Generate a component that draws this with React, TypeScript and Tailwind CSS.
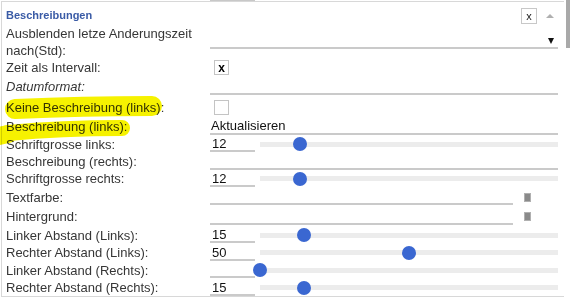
import type { ReactNode } from 'react';

interface RowProps {
  h: string;
  label: ReactNode;
  italic?: boolean;
  children?: ReactNode;
}

function Row({ h, label, italic, children }: RowProps) {
  return (
    <div className={`flex items-center ${h}`}>
      <div className={`w-[208px] shrink-0 pl-[4px] text-[13px] leading-[17px] text-[#363636] ${italic ? 'italic' : ''}`}>
        {label}
      </div>
      <div className="flex flex-1 items-center pr-[6px]">{children}</div>
    </div>
  );
}

function Field({ value, width = 'w-[45px]' }: { value?: string; width?: string }) {
  return (
    <div className={`h-[16px] shrink-0 border-b-2 border-[#cacaca] pl-[2px] pt-[1px] text-[13px] leading-[14px] text-[#111] ${width}`}>
      {value}
    </div>
  );
}

function Slider({ at }: { at: number }) {
  return (
    <div className="relative ml-[5px] h-[5px] flex-1 bg-[#ececec]">
      <div
        className="absolute top-1/2 h-[14px] w-[14px] -translate-y-1/2 rounded-full bg-[#3a67d1]"
        style={{ left: at - 7 }}
      />
    </div>
  );
}

function Check({ on }: { on?: boolean }) {
  return (
    <div className="ml-[4px] flex h-[15px] w-[15px] items-center justify-center border border-[#c4c4c4] text-[12px] font-bold leading-none text-black">
      {on ? 'x' : ''}
    </div>
  );
}

function Swatch() {
  return <div className="ml-[11px] h-[9px] w-[7px] border border-[#b0b0b0] bg-[#8a8a8a]" />;
}

export default function App() {
  return (
    <div className="relative h-[301px] w-[570px] overflow-hidden bg-white font-['Liberation_Sans',Arial,sans-serif]">
      <div className="h-[1px] pl-[210px]">
        <div className="h-full w-[45px] bg-[#c8c8c8]" />
      </div>

      <div className="ml-[1px] w-[563px] border-t border-b border-l border-[#d8d8d8]">
        <div className="flex h-[23px] items-start">
          <div className="pl-[4px] pt-[7px] text-[11px] font-bold leading-[13px] text-[#3a5ba6]">Beschreibungen</div>
          <div className="ml-auto mt-[6px] flex h-[16px] w-[16px] items-center justify-center border border-[#c8c8c8] text-[11px] leading-none text-[#222]">
            x
          </div>
          <div className="ml-[9px] mr-[10px] mt-[12px] h-0 w-0 border-x-[4px] border-b-[4px] border-x-transparent border-b-[#b0b0b0]" />
        </div>

        <Row h="h-[34px]" label={<>Ausblenden letze Anderungszeit<br />nach(Std):</>}>
          <div className="flex h-[14px] flex-1 items-center justify-end border-b-2 border-[#cacaca] pr-[4px]">
            <div className="h-0 w-0 border-x-[3.5px] border-t-[6px] border-x-transparent border-t-[#111]" />
          </div>
        </Row>
        <Row h="h-[17px]" label="Zeit als Intervall:">
          <Check on />
        </Row>
        <Row h="h-[21px]" label="Datumformat:" italic>
          <Field width="flex-1" />
        </Row>
        <Row h="h-[20px]" label="Keine Beschreibung (links):">
          <Check />
        </Row>
        <Row h="h-[18px]" label="Beschreibung (links):">
          <div className="h-[17px] flex-1 border-b-2 border-[#cacaca] pl-[1px] text-[13px] leading-[15px] text-[#111]">
            Aktualisieren
          </div>
        </Row>
        <Row h="h-[18px]" label="Schriftgrosse links:">
          <Field value="12" />
          <Slider at={40} />
        </Row>
        <Row h="h-[17px]" label="Beschreibung (rechts):">
          <Field width="flex-1" />
        </Row>
        <Row h="h-[17px]" label="Schriftgrosse rechts:">
          <Field value="12" />
          <Slider at={40} />
        </Row>
        <Row h="h-[20px]" label="Textfarbe:">
          <Field width="w-[303px]" />
          <Swatch />
        </Row>
        <Row h="h-[19px]" label="Hintergrund:">
          <Field width="w-[303px]" />
          <Swatch />
        </Row>
        <Row h="h-[18px]" label="Linker Abstand (Links):">
          <Field value="15" />
          <Slider at={44} />
        </Row>
        <Row h="h-[17px]" label="Rechter Abstand (Links):">
          <Field value="50" />
          <Slider at={149} />
        </Row>
        <Row h="h-[18px]" label="Linker Abstand (Rechts):">
          <Field />
          <Slider at={0} />
        </Row>
        <Row h="h-[17px]" label="Rechter Abstand (Rechts):">
          <Field value="15" />
          <Slider at={44} />
        </Row>
      </div>

      {/* scrollbar thumb */}
      <div className="absolute right-0 top-0 h-[48px] w-[4px] bg-[#a9a9a9]" />

      {/* highlighter marks */}
      <svg className="pointer-events-none absolute left-0 top-0 mix-blend-multiply" width="570" height="301">
        <path d="M15 109 C 60 107, 110 106, 152 106" stroke="#f6f200" strokeWidth="20" strokeLinecap="round" fill="none" />
        <path d="M8 133 C 40 130, 90 128, 122 128" stroke="#f6f200" strokeWidth="16" strokeLinecap="round" fill="none" />
        <path d="M-6 137 L 8 134" stroke="#f6f200" strokeWidth="18" strokeLinecap="round" fill="none" />
      </svg>
    </div>
  );
}
